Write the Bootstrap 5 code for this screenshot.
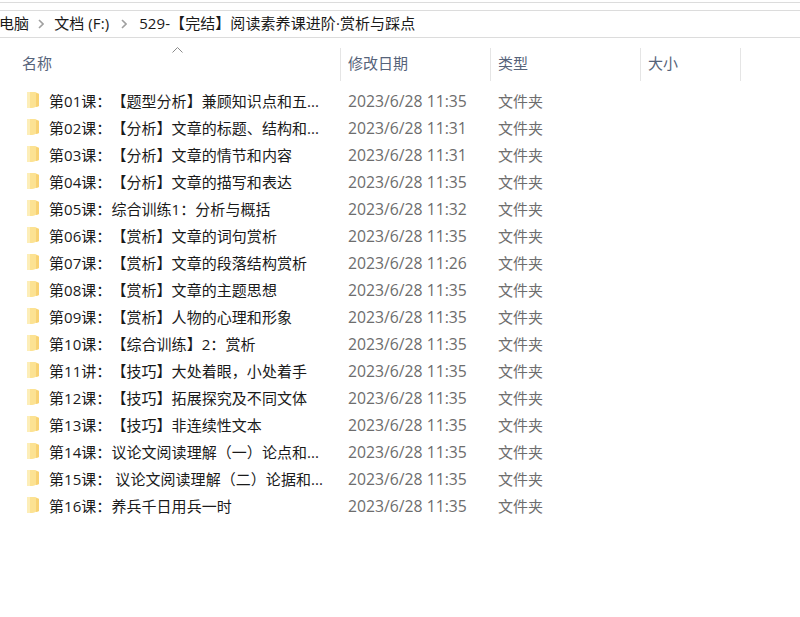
<!DOCTYPE html>
<html lang="zh"><head><meta charset="utf-8"><title>文件夹</title>
<link href="https://cdn.jsdelivr.net/npm/bootstrap@5.3.0/dist/css/bootstrap.min.css" rel="stylesheet">
<style>
html,body{height:100%;overflow:hidden;background:#fff}
body{font-family:"Open Sans","Noto Sans CJK SC",sans-serif;font-size:15px;color:#1a1a1a;line-height:1;font-feature-settings:"chws" 0,"palt" 0,"halt" 0;text-spacing-trim:space-all}
.top-rule{height:1px;background:#dcdcdc;margin-top:2px}
.crumbs{margin-top:7px;border-top:1px solid #dcdcdc;border-bottom:1px solid #dcdcdc;white-space:nowrap;box-sizing:content-box;height:26px;letter-spacing:.08px}
.crumbs>span{margin-top:-1px}
.crumb-sep{width:6px;height:10px;flex:none}
.sep-a{margin:-1px 10px 0 9px}
.sep-b{margin:-1px 12px 0 12px}
.crumb-first{margin-left:-1px}
.head-row{height:33px;margin-top:10px;color:#56637a;position:relative}
.col-name{width:340px;flex:none;padding-left:22px}
.col-date{width:150px;flex:none;padding-left:7px}
.col-kind{width:150px;flex:none;padding-left:7px}
.col-size{width:100px;flex:none;padding-left:7px}
.head-cell{height:33px;border-right:1px solid #e5e5e5;padding-top:8px}
.col-name.head-cell{width:341px}
.sort-mark{position:absolute;left:172px;top:-1px;width:11px;height:6px}
.file-list{margin-top:7px}
.file-row{height:27px;color:#1a1a1a}
.file-row .col-name{padding-left:27px;width:340px;display:flex;align-items:center;letter-spacing:.05px}
.fold{width:13px;height:16px;margin-right:9px;flex:none;margin-top:-3px}
.file-row .col-date,.file-row .col-kind{color:#6d6d6d;padding-left:8px}
.file-row .col-date{font-size:15.75px}
</style></head>
<body>
<div class="top-rule"></div>
<div class="crumbs d-flex align-items-center">
<span class="crumb-first">电脑</span>
<svg class="crumb-sep sep-a" viewBox="0 0 6 10"><path d="M1 1l4 4-4 4" fill="none" stroke="#a0a0a0" stroke-width="1.6"/></svg>
<span>文档 (F:)</span>
<svg class="crumb-sep sep-b" viewBox="0 0 6 10"><path d="M1 1l4 4-4 4" fill="none" stroke="#a0a0a0" stroke-width="1.6"/></svg>
<span>529-【完结】阅读素养课进阶·赏析与踩点</span>
</div>
<div class="head-row d-flex">
<svg class="sort-mark" viewBox="0 0 11 6"><path d="M.5 5.5l5-5 5 5" fill="none" stroke="#8a8a8a"/></svg>
<div class="col-name head-cell">名称</div><div class="col-date head-cell">修改日期</div><div class="col-kind head-cell">类型</div><div class="col-size head-cell">大小</div>
</div>
<div class="file-list">
<div class="file-row d-flex align-items-center"><div class="col-name"><svg class="fold" viewBox="0 0 13 16"><path d="M0 0h8l4 2v12l-7 2H0z" fill="#fdeeb8"/><path d="M3 0h5l4 2v12l-7 2H3z" fill="#fce293"/><path d="M9 1l3 1v12l-3 1z" fill="#f8d273"/></svg>第01课：【题型分析】兼顾知识点和五...</div><div class="col-date">2023/6/28 11:35</div><div class="col-kind">文件夹</div></div>
<div class="file-row d-flex align-items-center"><div class="col-name"><svg class="fold" viewBox="0 0 13 16"><path d="M0 0h8l4 2v12l-7 2H0z" fill="#fdeeb8"/><path d="M3 0h5l4 2v12l-7 2H3z" fill="#fce293"/><path d="M9 1l3 1v12l-3 1z" fill="#f8d273"/></svg>第02课：【分析】文章的标题、结构和...</div><div class="col-date">2023/6/28 11:31</div><div class="col-kind">文件夹</div></div>
<div class="file-row d-flex align-items-center"><div class="col-name"><svg class="fold" viewBox="0 0 13 16"><path d="M0 0h8l4 2v12l-7 2H0z" fill="#fdeeb8"/><path d="M3 0h5l4 2v12l-7 2H3z" fill="#fce293"/><path d="M9 1l3 1v12l-3 1z" fill="#f8d273"/></svg>第03课：【分析】文章的情节和内容</div><div class="col-date">2023/6/28 11:31</div><div class="col-kind">文件夹</div></div>
<div class="file-row d-flex align-items-center"><div class="col-name"><svg class="fold" viewBox="0 0 13 16"><path d="M0 0h8l4 2v12l-7 2H0z" fill="#fdeeb8"/><path d="M3 0h5l4 2v12l-7 2H3z" fill="#fce293"/><path d="M9 1l3 1v12l-3 1z" fill="#f8d273"/></svg>第04课：【分析】文章的描写和表达</div><div class="col-date">2023/6/28 11:35</div><div class="col-kind">文件夹</div></div>
<div class="file-row d-flex align-items-center"><div class="col-name"><svg class="fold" viewBox="0 0 13 16"><path d="M0 0h8l4 2v12l-7 2H0z" fill="#fdeeb8"/><path d="M3 0h5l4 2v12l-7 2H3z" fill="#fce293"/><path d="M9 1l3 1v12l-3 1z" fill="#f8d273"/></svg>第05课：综合训练1：分析与概括</div><div class="col-date">2023/6/28 11:32</div><div class="col-kind">文件夹</div></div>
<div class="file-row d-flex align-items-center"><div class="col-name"><svg class="fold" viewBox="0 0 13 16"><path d="M0 0h8l4 2v12l-7 2H0z" fill="#fdeeb8"/><path d="M3 0h5l4 2v12l-7 2H3z" fill="#fce293"/><path d="M9 1l3 1v12l-3 1z" fill="#f8d273"/></svg>第06课：【赏析】文章的词句赏析</div><div class="col-date">2023/6/28 11:35</div><div class="col-kind">文件夹</div></div>
<div class="file-row d-flex align-items-center"><div class="col-name"><svg class="fold" viewBox="0 0 13 16"><path d="M0 0h8l4 2v12l-7 2H0z" fill="#fdeeb8"/><path d="M3 0h5l4 2v12l-7 2H3z" fill="#fce293"/><path d="M9 1l3 1v12l-3 1z" fill="#f8d273"/></svg>第07课：【赏析】文章的段落结构赏析</div><div class="col-date">2023/6/28 11:26</div><div class="col-kind">文件夹</div></div>
<div class="file-row d-flex align-items-center"><div class="col-name"><svg class="fold" viewBox="0 0 13 16"><path d="M0 0h8l4 2v12l-7 2H0z" fill="#fdeeb8"/><path d="M3 0h5l4 2v12l-7 2H3z" fill="#fce293"/><path d="M9 1l3 1v12l-3 1z" fill="#f8d273"/></svg>第08课：【赏析】文章的主题思想</div><div class="col-date">2023/6/28 11:35</div><div class="col-kind">文件夹</div></div>
<div class="file-row d-flex align-items-center"><div class="col-name"><svg class="fold" viewBox="0 0 13 16"><path d="M0 0h8l4 2v12l-7 2H0z" fill="#fdeeb8"/><path d="M3 0h5l4 2v12l-7 2H3z" fill="#fce293"/><path d="M9 1l3 1v12l-3 1z" fill="#f8d273"/></svg>第09课：【赏析】人物的心理和形象</div><div class="col-date">2023/6/28 11:35</div><div class="col-kind">文件夹</div></div>
<div class="file-row d-flex align-items-center"><div class="col-name"><svg class="fold" viewBox="0 0 13 16"><path d="M0 0h8l4 2v12l-7 2H0z" fill="#fdeeb8"/><path d="M3 0h5l4 2v12l-7 2H3z" fill="#fce293"/><path d="M9 1l3 1v12l-3 1z" fill="#f8d273"/></svg>第10课：【综合训练】2：赏析</div><div class="col-date">2023/6/28 11:35</div><div class="col-kind">文件夹</div></div>
<div class="file-row d-flex align-items-center"><div class="col-name"><svg class="fold" viewBox="0 0 13 16"><path d="M0 0h8l4 2v12l-7 2H0z" fill="#fdeeb8"/><path d="M3 0h5l4 2v12l-7 2H3z" fill="#fce293"/><path d="M9 1l3 1v12l-3 1z" fill="#f8d273"/></svg>第11讲：【技巧】大处着眼，小处着手</div><div class="col-date">2023/6/28 11:35</div><div class="col-kind">文件夹</div></div>
<div class="file-row d-flex align-items-center"><div class="col-name"><svg class="fold" viewBox="0 0 13 16"><path d="M0 0h8l4 2v12l-7 2H0z" fill="#fdeeb8"/><path d="M3 0h5l4 2v12l-7 2H3z" fill="#fce293"/><path d="M9 1l3 1v12l-3 1z" fill="#f8d273"/></svg>第12课：【技巧】拓展探究及不同文体</div><div class="col-date">2023/6/28 11:35</div><div class="col-kind">文件夹</div></div>
<div class="file-row d-flex align-items-center"><div class="col-name"><svg class="fold" viewBox="0 0 13 16"><path d="M0 0h8l4 2v12l-7 2H0z" fill="#fdeeb8"/><path d="M3 0h5l4 2v12l-7 2H3z" fill="#fce293"/><path d="M9 1l3 1v12l-3 1z" fill="#f8d273"/></svg>第13课：【技巧】非连续性文本</div><div class="col-date">2023/6/28 11:35</div><div class="col-kind">文件夹</div></div>
<div class="file-row d-flex align-items-center"><div class="col-name"><svg class="fold" viewBox="0 0 13 16"><path d="M0 0h8l4 2v12l-7 2H0z" fill="#fdeeb8"/><path d="M3 0h5l4 2v12l-7 2H3z" fill="#fce293"/><path d="M9 1l3 1v12l-3 1z" fill="#f8d273"/></svg>第14课：议论文阅读理解（一）论点和...</div><div class="col-date">2023/6/28 11:35</div><div class="col-kind">文件夹</div></div>
<div class="file-row d-flex align-items-center"><div class="col-name"><svg class="fold" viewBox="0 0 13 16"><path d="M0 0h8l4 2v12l-7 2H0z" fill="#fdeeb8"/><path d="M3 0h5l4 2v12l-7 2H3z" fill="#fce293"/><path d="M9 1l3 1v12l-3 1z" fill="#f8d273"/></svg>第15课： 议论文阅读理解（二）论据和...</div><div class="col-date">2023/6/28 11:35</div><div class="col-kind">文件夹</div></div>
<div class="file-row d-flex align-items-center"><div class="col-name"><svg class="fold" viewBox="0 0 13 16"><path d="M0 0h8l4 2v12l-7 2H0z" fill="#fdeeb8"/><path d="M3 0h5l4 2v12l-7 2H3z" fill="#fce293"/><path d="M9 1l3 1v12l-3 1z" fill="#f8d273"/></svg>第16课：养兵千日用兵一时</div><div class="col-date">2023/6/28 11:35</div><div class="col-kind">文件夹</div></div>
</div>
<script src="https://cdn.jsdelivr.net/npm/bootstrap@5.3.0/dist/js/bootstrap.bundle.min.js"></script>
</body></html>
